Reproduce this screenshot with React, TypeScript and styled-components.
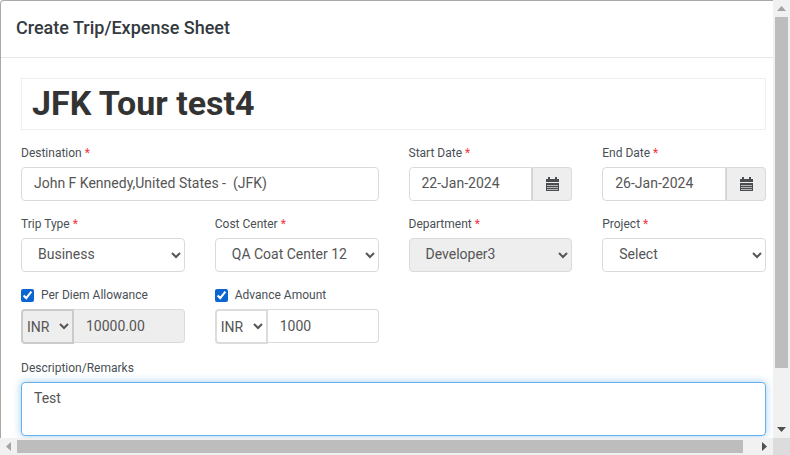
import styled, { createGlobalStyle } from 'styled-components';
import { FC, ReactNode } from 'react';

const GlobalStyle = createGlobalStyle`
    html, body {
        margin: 0;
        height: 100%;
        overflow: hidden;
        background: #fff;
    }
`;

const CalendarIcon: FC = () => (
    <svg viewBox='0 0 13 14' width='13' height='14'>
        <path fill='#4a4d50' d='M2 0h2v2h5V0h2v2h2v3H0V2h2z' />
        <path fill='#4a4d50' d='M0 6h13v8H0z' />
        <path fill='#b4b6b8' d='M1 8h11v1H1zM1 10h11v1H1zM1 12h11v1H1z' />
    </svg>
);

const Field: FC<{ label: string; required?: boolean; wide?: boolean; children: ReactNode }> = ({
    label,
    required,
    wide,
    children,
}) => (
    <FieldWrapper $wide={wide}>
        <Label>
            {label}
            {required && <Required> *</Required>}
        </Label>
        {children}
    </FieldWrapper>
);

const DateField: FC<{ label: string; value: string }> = ({ label, value }) => (
    <Field label={label} required>
        <InputGroup>
            <GroupInput defaultValue={value} />
            <CalendarAddon>
                <CalendarIcon />
            </CalendarAddon>
        </InputGroup>
    </Field>
);

const AmountField: FC<{ label: string; value: string; disabled?: boolean }> = ({
    label,
    value,
    disabled,
}) => (
    <FieldWrapper>
        <CheckLabel>
            <Checkbox type='checkbox' defaultChecked />
            {label}
        </CheckLabel>
        <InputGroup>
            <CurrencySelect $disabled={disabled} defaultValue='INR'>
                <option>INR</option>
            </CurrencySelect>
            <AmountInput defaultValue={value} readOnly={disabled} $disabled={disabled} />
        </InputGroup>
    </FieldWrapper>
);

const App: FC = () => (
    <Page>
        <GlobalStyle />
        <Modal>
            <Header>Create Trip/Expense Sheet</Header>
            <Body>
                <TitleBox>JFK Tour test4</TitleBox>
                <FormGrid>
                    <Field label='Destination' required wide>
                        <TextInput defaultValue='John F Kennedy,United States -  (JFK)' />
                    </Field>
                    <DateField label='Start Date' value='22-Jan-2024' />
                    <DateField label='End Date' value='26-Jan-2024' />
                    <Field label='Trip Type' required>
                        <Select defaultValue='Business'>
                            <option>Business</option>
                        </Select>
                    </Field>
                    <Field label='Cost Center' required>
                        <Select defaultValue='QA Coat Center 123'>
                            <option>QA Coat Center 123</option>
                        </Select>
                    </Field>
                    <Field label='Department' required>
                        <Select $disabled defaultValue='Developer3'>
                            <option>Developer3</option>
                        </Select>
                    </Field>
                    <Field label='Project' required>
                        <Select defaultValue='Select'>
                            <option>Select</option>
                        </Select>
                    </Field>
                    <AmountField label='Per Diem Allowance' value='10000.00' disabled />
                    <AmountField label='Advance Amount' value='1000' />
                </FormGrid>
                <RemarksLabel>Description/Remarks</RemarksLabel>
                <Remarks defaultValue='Test' />
            </Body>
        </Modal>
        <VerticalBar>
            <Arrow viewBox='0 0 9 5' width='9' height='5' $color='#a3a3a3'>
                <path d='M4.500 0 9 5H0z' />
            </Arrow>
            <VerticalThumb />
            <Arrow viewBox='0 0 9 5' width='9' height='5' $color='#505050'>
                <path d='M0 0h9L4.500 5z' />
            </Arrow>
        </VerticalBar>
        <HorizontalBar>
            <Arrow viewBox='0 0 5 9' width='5' height='9' $color='#a3a3a3'>
                <path d='M5 0v9L0 4.500z' />
            </Arrow>
            <HorizontalThumb />
            <Arrow viewBox='0 0 5 9' width='5' height='9' $color='#505050'>
                <path d='M0 0l5 4.500L0 9z' />
            </Arrow>
        </HorizontalBar>
        <Corner />
    </Page>
);

const Page = styled.div`
    display: grid;
    grid-template-columns: 773px 17px;
    grid-template-rows: 438px 17px;
    width: 790px;
    height: 455px;
    overflow: hidden;
    font-family: Roboto, 'Liberation Sans', sans-serif;
    color: #495057;
`;

const Modal = styled.div`
    border-top: 1px solid #a9a9ab;
    border-left: 1px solid #a9a9ab;
    border-top-left-radius: 4px;
    overflow: hidden;
    background: #fff;
`;

const Header = styled.div`
    height: 57px;
    box-sizing: border-box;
    padding: 16px 15px 0;
    border-bottom: 1px solid #e4e6e8;
    font-size: 18px;
    line-height: 22px;
    font-weight: 500;
    color: #343a40;
`;

const Body = styled.div`
    padding: 20px 7px 0 20px;
`;

const TitleBox = styled.div`
    height: 52px;
    box-sizing: border-box;
    padding: 0 10px;
    border: 1px solid #eeeff0;
    font-size: 34px;
    line-height: 48px;
    font-weight: 700;
    color: #333333;
`;

const FormGrid = styled.div`
    display: grid;
    grid-template-columns: repeat(4, 163.75px);
    column-gap: 30px;
    row-gap: 15px;
    margin-top: 15px;
`;

const FieldWrapper = styled.div<{ $wide?: boolean }>`
    grid-column: ${({ $wide }) => ($wide ? 'span 2' : 'span 1')};
    min-width: 0;
`;

const Label = styled.div`
    height: 22px;
    font-size: 12px;
    line-height: 16px;
    color: #4a4f55;
`;

const Required = styled.span`
    color: #f5353f;
`;

const controlBase = `
    display: block;
    width: 100%;
    height: 34px;
    box-sizing: border-box;
    border: 1px solid #d8dbde;
    border-radius: 4px;
    font-family: Roboto, 'Liberation Sans', sans-serif;
    font-size: 14px;
    color: #555555;
    outline: none;
`;

const TextInput = styled.input`
    ${controlBase}
    padding: 0 12px 2px;
    background: #fff;
`;

const Select = styled.select<{ $disabled?: boolean }>`
    ${controlBase}
    padding: 0 15px 2px 12px;
    background: ${({ $disabled }) => ($disabled ? '#eeeeee' : '#fff')};
`;

const InputGroup = styled.div`
    display: flex;
    align-items: flex-start;
    height: 34px;
`;

const GroupInput = styled.input`
    ${controlBase}
    flex: 1;
    min-width: 0;
    padding: 0 12px 2px;
    border-radius: 4px 0 0 4px;
    background: #fff;
`;

const CalendarAddon = styled.div`
    display: flex;
    align-items: center;
    justify-content: center;
    width: 40px;
    height: 34px;
    box-sizing: border-box;
    border: 1px solid #d8dbde;
    border-left: 1px solid #d0d3d6;
    border-radius: 0 4px 4px 0;
    background: #eeeeee;
`;

const CheckLabel = styled.label`
    display: flex;
    align-items: flex-start;
    gap: 7px;
    height: 22px;
    padding-top: 2px;
    box-sizing: border-box;
    font-size: 12px;
    line-height: 13px;
    color: #4a4f55;
`;

const Checkbox = styled.input`
    width: 13px;
    height: 13px;
    margin: 0;
    accent-color: #0a64d2;
`;

const CurrencySelect = styled.select<{ $disabled?: boolean }>`
    width: 53px;
    height: 35px;
    flex: none;
    box-sizing: border-box;
    padding: 0;
    border: 2px solid ${({ $disabled }) => ($disabled ? '#c9cbcd' : '#dadcde')};
    border-radius: 4px 0 0 4px;
    font-family: Roboto, 'Liberation Sans', sans-serif;
    font-size: 14px;
    color: #555555;
    background: ${({ $disabled }) => ($disabled ? '#eeeeee' : '#fff')};
`;

const AmountInput = styled.input<{ $disabled?: boolean }>`
    ${controlBase}
    flex: 1;
    min-width: 0;
    padding: 0 12px;
    border-left: 0;
    border-radius: 0 4px 4px 0;
    background: ${({ $disabled }) => ($disabled ? '#eeeeee' : '#fff')};
`;

const RemarksLabel = styled(Label)`
    margin-top: 17px;
`;

const Remarks = styled.textarea`
    display: block;
    width: 100%;
    height: 54px;
    box-sizing: border-box;
    padding: 5px 12px;
    border: 1px solid #66afe9;
    border-radius: 4px;
    box-shadow: 0 0 8px rgba(102, 175, 233, 0.6);
    resize: none;
    outline: none;
    font-family: Roboto, 'Liberation Sans', sans-serif;
    font-size: 14px;
    line-height: 20px;
    color: #555555;
`;

const VerticalBar = styled.div`
    grid-column: 2;
    grid-row: 1;
    display: flex;
    flex-direction: column;
    align-items: center;
    justify-content: space-between;
    padding: 6px 0;
    box-sizing: border-box;
    background: #f1f1f1;
`;

const VerticalThumb = styled.div`
    width: 13px;
    height: 351px;
    margin-top: 6px;
    margin-bottom: auto;
    background: #bdbdbd;
`;

const HorizontalBar = styled.div`
    grid-column: 1;
    grid-row: 2;
    display: flex;
    align-items: center;
    justify-content: space-between;
    padding: 0 6px;
    background: #f1f1f1;
`;

const HorizontalThumb = styled.div`
    width: 726px;
    height: 13px;
    margin-left: 6px;
    margin-right: auto;
    background: #bdbdbd;
`;

const Arrow = styled.svg<{ $color: string }>`
    flex: none;
    fill: ${({ $color }) => $color};
`;

const Corner = styled.div`
    background: #dcdcdc;
`;

export default App;
